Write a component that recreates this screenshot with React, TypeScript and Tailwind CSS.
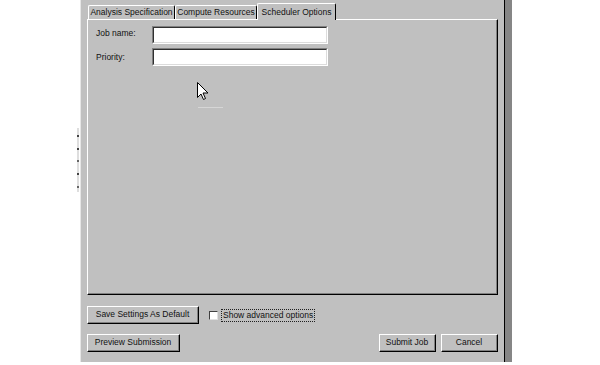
import React from "react";

function Btn({ className, children }: { className: string; children: React.ReactNode }) {
  return (
    <div className={`h-[18px] border-t border-l border-t-white border-l-white border-b border-r border-b-black border-r-black bg-[#c0c0c0] ${className}`}>
      <div className="h-full w-full border-b border-r border-b-[#808080] border-r-[#808080] flex items-center justify-center">
        <span className="leading-none">{children}</span>
      </div>
    </div>
  );
}

function Field({ label, labelClass }: { label: string; labelClass: string }) {
  return (
    <div className="flex items-start">
      <div className={`w-[56px] leading-none ${labelClass}`}>{label}</div>
      <div className="w-[176px] h-[18px] border-t border-l border-t-[#808080] border-l-[#808080] border-b border-r border-b-white border-r-white">
        <div className="h-full w-full bg-white border-t border-l border-t-[#303030] border-l-[#303030] border-b border-r border-b-[#dcdcdc] border-r-[#dcdcdc]" />
      </div>
    </div>
  );
}

function Tab({ className, children }: { className: string; children: React.ReactNode }) {
  return (
    <div className={`h-[14px] mt-[2px] border-t border-l border-t-white border-l-white border-r border-r-black rounded-tl-[2px] rounded-tr-[2px] flex items-center justify-center ${className}`}>
      <span className="leading-none whitespace-nowrap">{children}</span>
    </div>
  );
}

export default function App() {
  return (
    <div className="w-[600px] h-[365px] bg-white flex font-['Liberation_Sans',Arial,sans-serif] text-[8.5px] text-[#111] relative overflow-hidden">
      <div className="w-[80px] h-full relative">
        <div className="absolute left-[77px] top-[128px] w-[2px] h-[64px] bg-[#dedede]" />
        <div className="absolute left-[77px] top-[135px] w-[2px] h-[2px] bg-[#444]" />
        <div className="absolute left-[77px] top-[148px] w-[2px] h-[2px] bg-[#444]" />
        <div className="absolute left-[77px] top-[160px] w-[2px] h-[2px] bg-[#666]" />
        <div className="absolute left-[77px] top-[173px] w-[2px] h-[2px] bg-[#444]" />
        <div className="absolute left-[77px] top-[186px] w-[2px] h-[2px] bg-[#666]" />
      </div>
      <div className="w-[433px] h-[362px] flex">
        <div className="w-[425px] h-full bg-[#c0c0c0] border-l border-l-[#e6e6e6] border-r border-r-black flex flex-col pl-[6px] pr-[6px] pt-[3px]">
          <div className="flex items-start h-[16px] pl-[1px] relative z-10">
            <Tab className="w-[87px]">Analysis Specification</Tab>
            <Tab className="w-[82px]">Compute Resources</Tab>
            <div className="h-[17px] w-[79px] border-t border-l border-t-white border-l-white border-r border-r-black rounded-tl-[2px] rounded-tr-[2px] bg-[#c0c0c0] flex items-center justify-center -mb-[1px]">
              <span className="leading-none whitespace-nowrap">Scheduler Options</span>
            </div>
          </div>
          <div className="w-[411px] h-[276px] border-t border-l border-t-white border-l-white border-b border-r border-b-black border-r-black">
            <div className="w-full h-full border-b border-r border-b-[#808080] border-r-[#808080] flex flex-col gap-[4px] pl-[8px] pt-[6px]">
              <Field label="Job name:" labelClass="pt-[3px]" />
              <Field label="Priority:" labelClass="pt-[5px]" />
            </div>
          </div>
          <div className="flex items-center mt-[11px]">
            <Btn className="w-[112px]">Save Settings As Default</Btn>
            <div className="ml-[10px] w-[9px] h-[9px] bg-white border-t border-l border-t-[#404040] border-l-[#404040] border-b border-r border-b-[#e0e0e0] border-r-[#e0e0e0]" />
            <div className="ml-[3px] h-[13px] px-[1px] border border-dotted border-[#202020] flex items-center">
              <span className="leading-none">Show advanced options</span>
            </div>
          </div>
          <div className="flex items-center mt-[10px]">
            <Btn className="w-[93px]">Preview Submission</Btn>
            <div className="flex-1" />
            <Btn className="w-[57px]">Submit Job</Btn>
            <Btn className="w-[57px] ml-[5px]">Cancel</Btn>
          </div>
        </div>
        <div className="w-[7px] h-full bg-[#868686]" />
      </div>
      <div className="absolute left-[198px] top-[107px] w-[25px] h-[1px] bg-[#d6d6d6]" />
      <svg className="absolute left-[197px] top-[82px]" width="12" height="19" viewBox="0 0 12 19">
        <path d="M0.5 0.5 L0.5 15.5 L4 12 L6.5 17.5 L8.5 16.5 L6 11 L11 11 Z" fill="white" stroke="black" strokeWidth="1" strokeLinejoin="miter" />
      </svg>
    </div>
  );
}
